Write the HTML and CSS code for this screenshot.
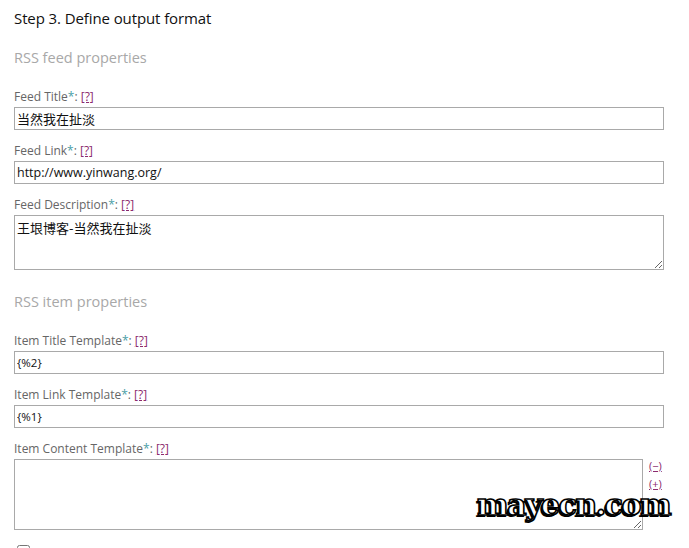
FILE: index.html
```html
<!DOCTYPE html>
<html>
<head>
<meta charset="utf-8">
<link rel="stylesheet" href="styles.css">
</head>
<body>
<div class="page">
  <h2 class="step">Step 3. Define output format</h2>
  <h3 class="section">RSS feed properties</h3>
  <div class="field">
    <div class="label">Feed Title<span class="req">*</span>: <a class="help" href="#">[?]</a></div>
    <input class="box cjk" type="text" value="当然我在扯淡">
  </div>
  <div class="field">
    <div class="label">Feed Link<span class="req">*</span>: <a class="help" href="#">[?]</a></div>
    <input class="box" type="text" value="http://www.yinwang.org/">
  </div>
  <div class="field last">
    <div class="label">Feed Description<span class="req">*</span>: <a class="help" href="#">[?]</a></div>
    <textarea class="area cjk">王垠博客-当然我在扯淡</textarea>
  </div>
  <h3 class="section">RSS item properties</h3>
  <div class="field">
    <div class="label">Item Title Template<span class="req">*</span>: <a class="help" href="#">[?]</a></div>
    <input class="box small" type="text" value="{%2}">
  </div>
  <div class="field">
    <div class="label">Item Link Template<span class="req">*</span>: <a class="help" href="#">[?]</a></div>
    <input class="box small" type="text" value="{%1}">
  </div>
  <div class="field content">
    <div class="label">Item Content Template<span class="req">*</span>: <a class="help" href="#">[?]</a></div>
    <div class="arearow">
      <textarea class="area tall"></textarea>
      <div class="sizers">
        <a class="sizer" href="#">(&minus;)</a>
        <a class="sizer" href="#">(+)</a>
      </div>
    </div>
  </div>
  <div class="check"><input type="checkbox"></div>
</div>
<div class="watermark">mayecn.com</div>
</body>
</html>
```

FILE: styles.css
```css
html, body {
  margin: 0;
  padding: 0;
  background: #fff;
  overflow: hidden;
}
body {
  font-family: "Open Sans", "Noto Sans", "Noto Sans CJK SC", sans-serif;
  color: #222;
}
.page {
  padding: 8px 25px 0 14px;
  position: relative;
}
.step {
  margin: 0;
  font-size: 15px;
  font-weight: normal;
  line-height: 20px;
  letter-spacing: -0.1px;
  color: #111;
}
.section {
  margin: 20px 0 21px;
  font-size: 14.5px;
  font-weight: normal;
  line-height: 20px;
  color: #a8a8a8;
}
.field {
  margin-bottom: 13px;
}
.field.last {
  margin-bottom: 22px;
}
.field.content {
  margin-bottom: 11px;
}
.label {
  font-size: 12px;
  line-height: 16px;
  color: #666;
  margin-bottom: 2px;
}
.req {
  color: #4a9ea6;
}
.help {
  color: #8b2a6e;
  text-decoration: underline;
}
.box {
  display: block;
  box-sizing: border-box;
  width: 650px;
  height: 23px;
  margin: 0;
  padding: 0 2px;
  border: 1px solid #a9a9a9;
  font-family: "Open Sans", "Noto Sans", sans-serif;
  font-size: 12.5px;
  color: #111;
  outline: none;
}
.box.small {
  font-size: 11.5px;
}
.cjk {
  font-family: "Noto Sans CJK SC", sans-serif;
  font-size: 13px;
}
.area {
  display: block;
  box-sizing: border-box;
  width: 650px;
  height: 55px;
  margin: 0;
  padding: 3px 2px;
  border: 1px solid #a9a9a9;
  font-size: 13px;
  line-height: 18px;
  color: #111;
  resize: both;
  outline: none;
}
.area.tall {
  width: 629px;
  height: 71px;
}
.arearow {
  display: flex;
  gap: 6px;
  align-items: flex-start;
}
.sizers {
  display: flex;
  flex-direction: column;
  gap: 2px;
  margin-top: -1px;
}
.sizer {
  font-size: 11px;
  line-height: 16px;
  color: #8b2a6e;
  text-decoration: underline;
}
.check {
  padding-left: 3px;
}
.check input {
  margin: 0;
  width: 13px;
  height: 13px;
}
.watermark {
  position: absolute;
  left: 477px;
  top: 485px;
  font-family: "DejaVu Serif", serif;
  font-weight: bold;
  font-size: 30px;
  letter-spacing: -1.5px;
  color: #fff;
  -webkit-text-stroke: 1.6px #000;
  text-shadow: -2px 2px 0 #000;
  line-height: 40px;
}
```
